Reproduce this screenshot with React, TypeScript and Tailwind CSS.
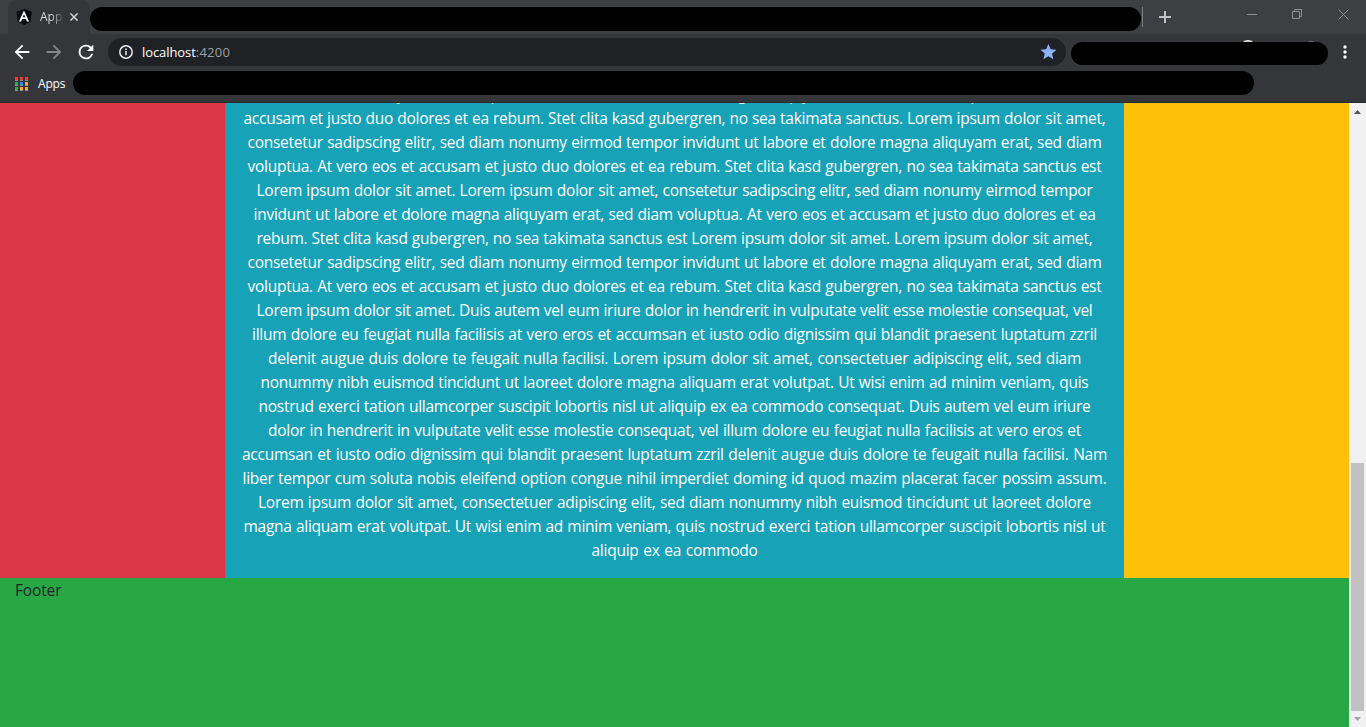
const lines: { text: string; width: number }[] = [
  { text: 'elitr, sed diam nonumy eirmod tempor invidunt ut labore et dolore magna aliquyam erat, sed diam voluptua. At vero eos et', width: 865 },
  { text: 'accusam et justo duo dolores et ea rebum. Stet clita kasd gubergren, no sea takimata sanctus. Lorem ipsum dolor sit amet,', width: 862 },
  { text: 'consetetur sadipscing elitr, sed diam nonumy eirmod tempor invidunt ut labore et dolore magna aliquyam erat, sed diam', width: 854 },
  { text: 'voluptua. At vero eos et accusam et justo duo dolores et ea rebum. Stet clita kasd gubergren, no sea takimata sanctus est', width: 854 },
  { text: 'Lorem ipsum dolor sit amet. Lorem ipsum dolor sit amet, consetetur sadipscing elitr, sed diam nonumy eirmod tempor', width: 836 },
  { text: 'invidunt ut labore et dolore magna aliquyam erat, sed diam voluptua. At vero eos et accusam et justo duo dolores et ea', width: 842 },
  { text: 'rebum. Stet clita kasd gubergren, no sea takimata sanctus est Lorem ipsum dolor sit amet. Lorem ipsum dolor sit amet,', width: 836 },
  { text: 'consetetur sadipscing elitr, sed diam nonumy eirmod tempor invidunt ut labore et dolore magna aliquyam erat, sed diam', width: 854 },
  { text: 'voluptua. At vero eos et accusam et justo duo dolores et ea rebum. Stet clita kasd gubergren, no sea takimata sanctus est', width: 854 },
  { text: 'Lorem ipsum dolor sit amet. Duis autem vel eum iriure dolor in hendrerit in vulputate velit esse molestie consequat, vel', width: 836 },
  { text: 'illum dolore eu feugiat nulla facilisis at vero eros et accumsan et iusto odio dignissim qui blandit praesent luptatum zzril', width: 845 },
  { text: 'delenit augue duis dolore te feugait nulla facilisi. Lorem ipsum dolor sit amet, consectetuer adipiscing elit, sed diam', width: 813 },
  { text: 'nonummy nibh euismod tincidunt ut laoreet dolore magna aliquam erat volutpat. Ut wisi enim ad minim veniam, quis', width: 828 },
  { text: 'nostrud exerci tation ullamcorper suscipit lobortis nisl ut aliquip ex ea commodo consequat. Duis autem vel eum iriure', width: 832 },
  { text: 'dolor in hendrerit in vulputate velit esse molestie consequat, vel illum dolore eu feugiat nulla facilisis at vero eros et', width: 813 },
  { text: 'accumsan et iusto odio dignissim qui blandit praesent luptatum zzril delenit augue duis dolore te feugait nulla facilisi. Nam', width: 865 },
  { text: 'liber tempor cum soluta nobis eleifend option congue nihil imperdiet doming id quod mazim placerat facer possim assum.', width: 864 },
  { text: 'Lorem ipsum dolor sit amet, consectetuer adipiscing elit, sed diam nonummy nibh euismod tincidunt ut laoreet dolore', width: 833 },
  { text: 'magna aliquam erat volutpat. Ut wisi enim ad minim veniam, quis nostrud exerci tation ullamcorper suscipit lobortis nisl ut', width: 862 },
  { text: 'aliquip ex ea commodo', width: 166 },
];

const appDots = [
  'bg-[#f03a34]', 'bg-[#f03a34]', 'bg-[#f03a34]',
  'bg-[#34a853]', 'bg-[#2b8cff]', 'bg-[#fbaf14]',
  'bg-[#34a853]', 'bg-[#fbaf14]', 'bg-[#fbaf14]',
];

function TabStrip() {
  return (
    <div className="flex h-[34px] bg-[#3c4043]">
      <div className="ml-2 flex h-[34px] w-[82px] shrink-0 items-center rounded-t-lg bg-[#35363a] pl-2">
        <svg className="shrink-0" width="16" height="16" viewBox="0 0 16 16">
          <path d="M8 0 15.6 2.7 14.4 12.5 8 16 1.6 12.5.4 2.7Z" fill="#0c1118" />
          <path d="M8 0 15.6 2.7 14.4 12.5 8 16Z" fill="#02050a" />
          <path d="M8 1.5 2.9 12.4h2.2l1-2.4h3.8l1 2.4h2.2ZM8 5.2l1.3 3.1H6.7Z" fill="#fff" />
        </svg>
        <span className="ml-2 w-[22px] overflow-hidden bg-gradient-to-r from-[#dfe1e5] from-50% to-[#55575b] bg-clip-text text-[12px] leading-4 text-transparent">App</span>
        <svg className="ml-[8px] shrink-0" width="8" height="8" viewBox="0 0 8 8" stroke="#d0d2d6" strokeWidth="1.5">
          <path d="M.4.4l7.2 7.2M7.6.4L.4 7.6" />
        </svg>
      </div>
      <div className="mt-[6.5px] h-6 w-[1051px] shrink-0 rounded-full bg-black" />
      <div className="mt-[7px] ml-[1px] h-5 w-px bg-[#7b7e81]" />
      <svg className="mt-[11px] ml-4" width="12" height="12" viewBox="0 0 12 12" stroke="#bdc1c6" strokeWidth="2">
        <path d="M6 0v12M0 6h12" />
      </svg>
      <div className="mr-[17px] ml-auto flex gap-[35px] pt-[9px]">
        <svg width="11" height="11" viewBox="0 0 11 11" stroke="#8f9193"><path d="M1 5.5h10" /></svg>
        <svg width="11" height="11" viewBox="0 0 11 11" fill="none" stroke="#8f9193">
          <path d="M.5 2.5h7v7h-7zM2.5 2.5v-2h7v7h-2" />
        </svg>
        <svg width="11" height="11" viewBox="0 0 11 11" stroke="#8f9193"><path d="M.5.5l10 10M10.5.5l-10 10" /></svg>
      </div>
    </div>
  );
}

function Toolbar() {
  return (
    <div className="flex h-9 items-center pl-[11px]">
      <svg className="mr-2.5 shrink-0" width="22" height="22" viewBox="0 0 24 24" fill="#fff">
        <path d="M20 11H7.83l5.59-5.59L12 4l-8 8 8 8 1.41-1.41L7.83 13H20z" />
      </svg>
      <svg className="mr-2.5 shrink-0" width="22" height="22" viewBox="0 0 24 24" fill="#85878a">
        <path d="M12 4l-1.41 1.41L16.17 11H4v2h12.17l-5.58 5.59L12 20l8-8z" />
      </svg>
      <svg className="shrink-0" width="22" height="22" viewBox="0 0 24 24" fill="#fff">
        <path d="M17.65 6.35A7.96 7.96 0 0 0 12 4a8 8 0 1 0 7.73 10h-2.08A6 6 0 1 1 12 6c1.66 0 3.14.69 4.22 1.78L13 11h7V4z" />
      </svg>
      <div className="ml-[11px] flex h-7 w-[958px] shrink-0 items-center rounded-full bg-[#202124] pr-[10px] pl-[11px]">
        <svg width="14" height="14" viewBox="0 0 14 14" fill="none" stroke="#e8eaed" strokeWidth="1.5">
          <circle cx="7" cy="7" r="6.2" />
          <path d="M7 6v4.3M7 3.4V5" />
        </svg>
        <span className="ml-[9px] text-[13px] leading-4 tracking-[-0.08px] text-white">
          localhost<span className="tracking-[0.25px] text-[#9aa0a6]">:4200</span>
        </span>
        <svg className="ml-auto" width="16" height="16" viewBox="1.5 2 20 20" fill="#8ab4f8">
          <path d="M12 17.27 18.18 21l-1.64-7.03L22 9.24l-7.19-.61L12 2 9.19 8.63 2 9.24l5.46 4.73L5.82 21z" />
        </svg>
      </div>
      <div className="relative ml-[5px] h-6 w-[257px] shrink-0">
        <div className="absolute -top-[0.5px] left-[169px] h-4 w-4 rounded-full bg-[#dcdcdc]" />
        <div className="absolute top-[0.5px] left-[236px] h-2 w-2 rounded-full bg-[#77787b]" />
        <div className="relative top-[1.5px] h-[23.5px] rounded-full bg-black" />
      </div>
      <svg className="ml-[14.5px]" width="4" height="14" viewBox="0 0 4 14" fill="#fff">
        <circle cx="2" cy="2" r="1.7" /><circle cx="2" cy="7" r="1.7" /><circle cx="2" cy="12" r="1.7" />
      </svg>
    </div>
  );
}

function BookmarksBar() {
  return (
    <div className="flex h-[33px] items-start border-b border-[#292a2d] pl-[15px]">
      <div className="mt-[7px] grid grid-cols-[repeat(3,3px)] gap-x-[2px] gap-y-px">
        {appDots.map((dot, i) => (
          <div key={i} className={`h-1 w-[3px] border-b border-[#8d8e90] ${dot}`} />
        ))}
      </div>
      <span className="mt-[6px] ml-[10px] w-[27px] text-[12px] leading-4 tracking-[-0.2px] text-white">Apps</span>
      <div className="mt-px ml-2 h-6 w-[1181px] rounded-full bg-black" />
    </div>
  );
}

function Scrollbar() {
  return (
    <div className="flex w-[17px] shrink-0 flex-col items-center bg-[#f1f1f1]">
      <svg className="mt-[7px] shrink-0" width="7" height="4" viewBox="0 0 7 4" fill="#505050"><path d="M0 4 3.5 0 7 4z" /></svg>
      <div className="mt-auto h-[248px] w-[13px] shrink-0 bg-[#c1c1c1]" />
      <svg className="my-[6px] shrink-0" width="7" height="4" viewBox="0 0 7 4" fill="#a3a3a3"><path d="M0 0h7L3.5 4z" /></svg>
    </div>
  );
}

export default function App() {
  return (
    <div className="flex h-[727px] w-[1366px] flex-col overflow-hidden bg-[#35363a] font-['Segoe_UI','Open_Sans',sans-serif]">
      <header className="h-[103px] shrink-0">
        <TabStrip />
        <Toolbar />
        <BookmarksBar />
      </header>
      <div className="flex min-h-0 grow">
        <div className="flex w-[1349px] shrink-0 flex-col">
          <div className="flex h-[475px] shrink-0">
            <aside className="w-[225px] bg-[#dc3545]" />
            <main className="flex w-[899px] flex-col items-center justify-end overflow-hidden bg-[#17a2b8] pb-4 text-[15.5px] leading-6 tracking-[-0.26px] text-white">
              {lines.map((line, i) => (
                <p key={i} className="h-6 shrink-0 whitespace-nowrap [text-align-last:justify]" style={{ width: line.width }}>
                  {line.text}
                </p>
              ))}
            </main>
            <aside className="w-[225px] bg-[#ffc107]" />
          </div>
          <footer className="grow bg-[#28a745] px-[15px] text-[15.5px] leading-6 tracking-[-0.15px] text-[#212529]">Footer</footer>
        </div>
        <Scrollbar />
      </div>
    </div>
  );
}
